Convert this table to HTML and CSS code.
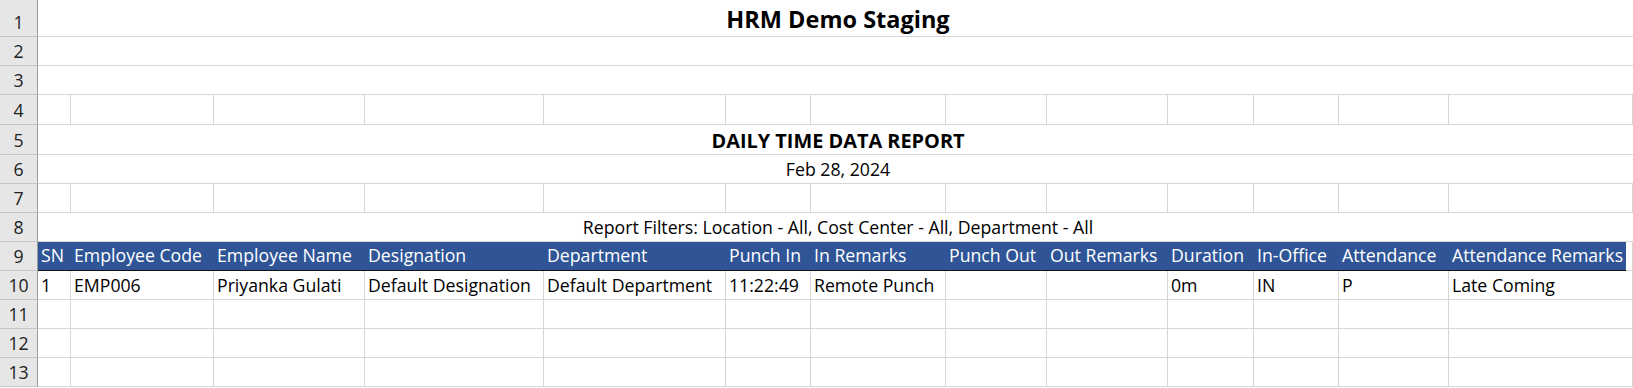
FILE: index.html
```html
<!DOCTYPE html>
<html lang="en">
<head>
<meta charset="utf-8">
<title>HRM Demo Staging - Daily Time Data Report</title>
<link rel="stylesheet" href="styles.css">
</head>
<body>
<div class="sheet">
  <div class="rh">1</div><div class="c merged title"><span>HRM Demo Staging</span></div>
  <div class="rh">2</div><div class="c merged"></div>
  <div class="rh">3</div><div class="c merged"></div>
  <div class="rh">4</div><div class="c"></div><div class="c"></div><div class="c"></div><div class="c"></div><div class="c"></div><div class="c"></div><div class="c"></div><div class="c"></div><div class="c"></div><div class="c"></div><div class="c"></div><div class="c"></div><div class="c nb"></div><div class="c"></div>
  <div class="rh">5</div><div class="c merged subtitle"><span>DAILY TIME DATA REPORT</span></div>
  <div class="rh">6</div><div class="c merged center"><span>Feb 28, 2024</span></div>
  <div class="rh">7</div><div class="c"></div><div class="c"></div><div class="c"></div><div class="c"></div><div class="c"></div><div class="c"></div><div class="c"></div><div class="c"></div><div class="c"></div><div class="c"></div><div class="c"></div><div class="c"></div><div class="c nb"></div><div class="c"></div>
  <div class="rh">8</div><div class="c merged center"><span>Report Filters: Location - All, Cost Center - All, Department - All</span></div>
  <div class="rh">9</div><div class="c hd"><span>SN</span></div><div class="c hd"><span>Employee Code</span></div><div class="c hd"><span>Employee Name</span></div><div class="c hd"><span>Designation</span></div><div class="c hd"><span>Department</span></div><div class="c hd"><span>Punch In</span></div><div class="c hd"><span>In Remarks</span></div><div class="c hd"><span>Punch Out</span></div><div class="c hd"><span>Out Remarks</span></div><div class="c hd"><span>Duration</span></div><div class="c hd"><span>In-Office</span></div><div class="c hd"><span>Attendance</span></div><div class="c hd"><span>Attendance Remarks</span></div><div class="c hd-end"></div>
  <div class="rh">10</div><div class="c"><span>1</span></div><div class="c"><span>EMP006</span></div><div class="c"><span>Priyanka Gulati</span></div><div class="c"><span>Default Designation</span></div><div class="c"><span>Default Department</span></div><div class="c"><span>11:22:49</span></div><div class="c"><span>Remote Punch</span></div><div class="c"></div><div class="c"></div><div class="c"><span>0m</span></div><div class="c"><span>IN</span></div><div class="c"><span>P</span></div><div class="c nb"><span>Late Coming</span></div><div class="c"></div>
  <div class="rh">11</div><div class="c"></div><div class="c"></div><div class="c"></div><div class="c"></div><div class="c"></div><div class="c"></div><div class="c"></div><div class="c"></div><div class="c"></div><div class="c"></div><div class="c"></div><div class="c"></div><div class="c nb"></div><div class="c"></div>
  <div class="rh">12</div><div class="c"></div><div class="c"></div><div class="c"></div><div class="c"></div><div class="c"></div><div class="c"></div><div class="c"></div><div class="c"></div><div class="c"></div><div class="c"></div><div class="c"></div><div class="c"></div><div class="c nb"></div><div class="c"></div>
  <div class="rh">13</div><div class="c"></div><div class="c"></div><div class="c"></div><div class="c"></div><div class="c"></div><div class="c"></div><div class="c"></div><div class="c"></div><div class="c"></div><div class="c"></div><div class="c"></div><div class="c"></div><div class="c nb"></div><div class="c"></div>
</div>
</body>
</html>
```

FILE: styles.css
```css
html, body {
  margin: 0;
  padding: 0;
  background: #ffffff;
  overflow: hidden;
}

.sheet {
  display: grid;
  grid-template-columns: 38px 33px 143px 151px 179px 182px 85px 135px 101px 121px 86px 85px 110px 177px 1fr;
  grid-template-rows: 37px 29px 29px 30px 30px 29px 29px 29px 29px 29px 29px 29px 29px;
  width: 1633px;
  height: 388px;
  font-family: "Open Sans", "Liberation Sans", sans-serif;
  font-size: 17.7px;
  color: #000000;
}

.rh {
  background: #e6e6e6;
  border-right: 1px solid #9b9b9b;
  border-bottom: 1px solid #c6c6c6;
  display: flex;
  align-items: flex-end;
  justify-content: center;
  padding-bottom: 4px;
  line-height: 1;
  color: #222222;
  box-sizing: border-box;
}

.c {
  border-right: 1px solid #d6d6d6;
  border-bottom: 1px solid #d6d6d6;
  box-sizing: border-box;
  display: flex;
  align-items: flex-end;
  padding: 0 0 4px 3px;
  line-height: 1;
  white-space: nowrap;
  overflow: hidden;
}

.nb {
  border-right: none;
}

.merged {
  grid-column: 2 / -1;
  border-right: none;
  justify-content: center;
  padding-left: 5px;
}

.title {
  font-weight: 700;
  font-size: 23.5px;
  padding-bottom: 5px;
}

.subtitle {
  font-weight: 700;
  font-size: 19.9px;
  padding-bottom: 3px;
}

.center {
  justify-content: center;
}

.hd {
  background: #2f5597;
  color: #ffffff;
  border-right: none;
  border-bottom: 1px solid #111111;
  padding-bottom: 5px;
}

.hd-end {
  border-bottom: 1px solid #d6d6d6;
}
```
